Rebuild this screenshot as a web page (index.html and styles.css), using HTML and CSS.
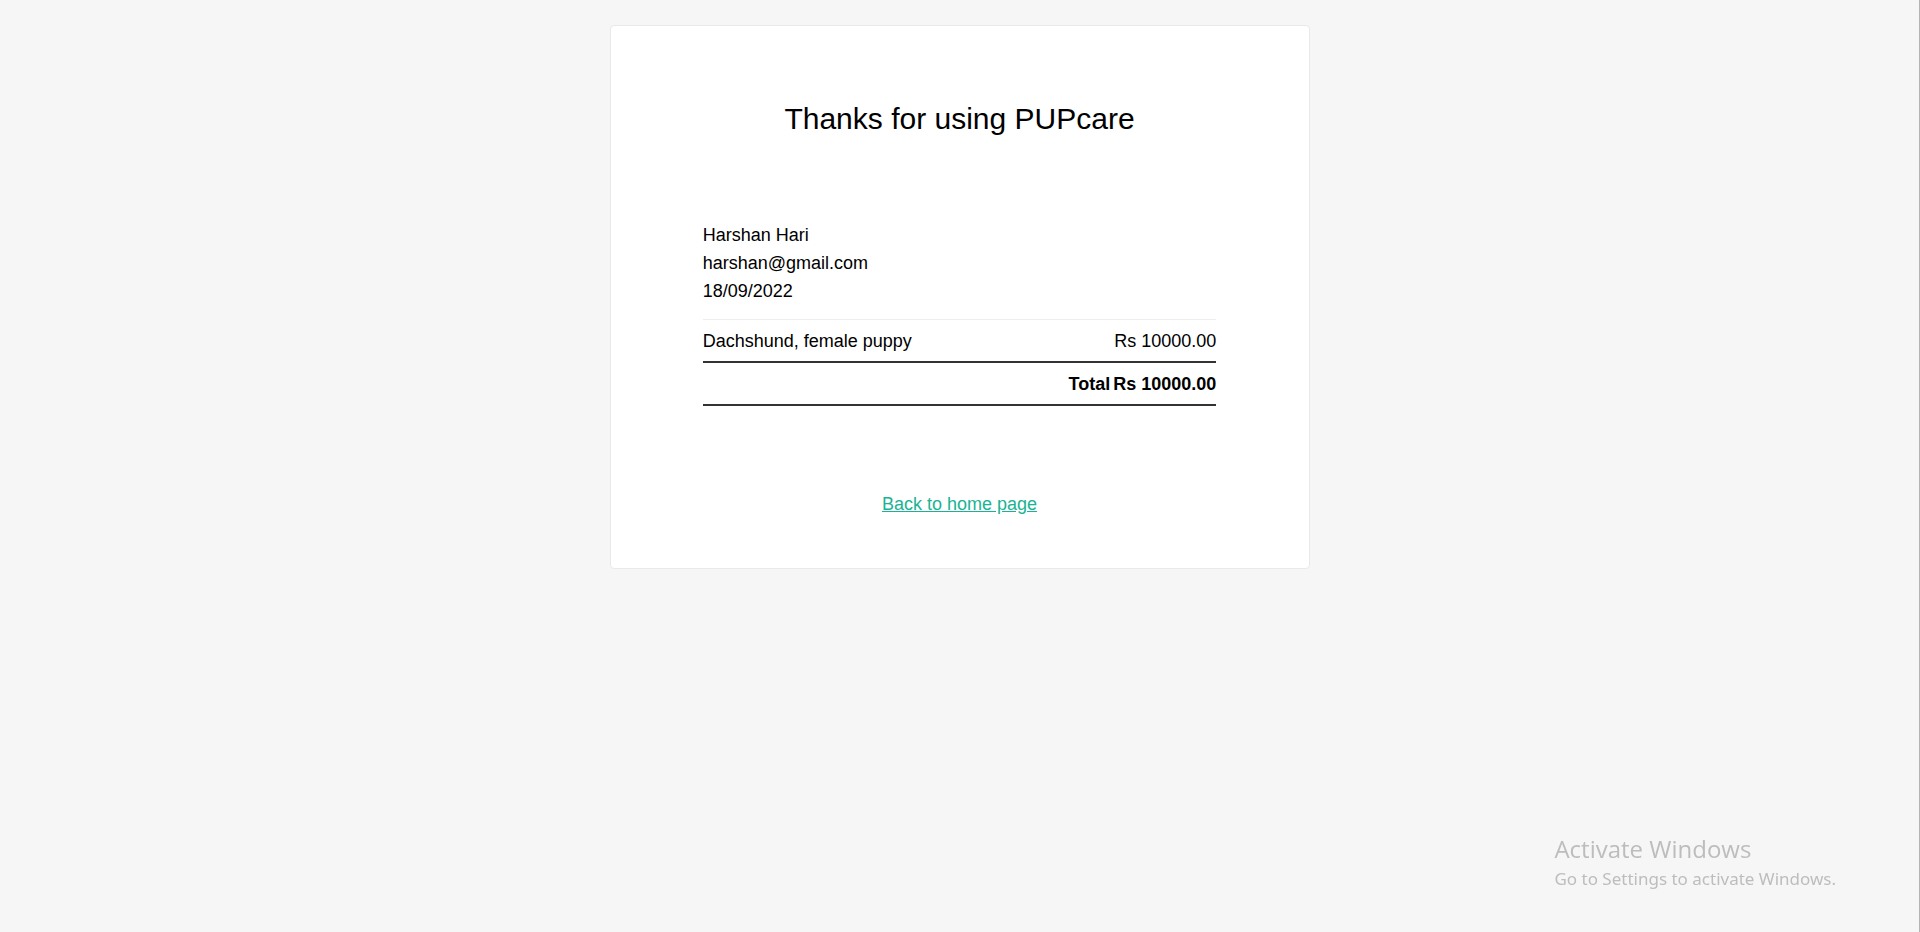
FILE: index.html
```html
<!DOCTYPE html>
<html lang="en">
<head>
<meta charset="utf-8">
<meta name="viewport" content="width=device-width, initial-scale=1">
<title>PUPcare - Receipt</title>
<link rel="stylesheet" href="styles.css">
</head>
<body>
<main class="receipt">
  <h1 class="receipt-title">Thanks for using PUPcare</h1>
  <div class="invoice">
    <address class="customer">
      <div>Harshan Hari</div>
      <div>harshan@gmail.com</div>
      <div>18/09/2022</div>
    </address>
    <table class="items">
      <tbody>
        <tr class="item">
          <td>Dachshund, female puppy</td>
          <td class="amount">Rs 10000.00</td>
        </tr>
      </tbody>
      <tfoot>
        <tr class="total">
          <th class="total-label" scope="row">Total</th>
          <td class="amount">Rs 10000.00</td>
        </tr>
      </tfoot>
    </table>
  </div>
  <a class="home-link" href="#">Back to home page</a>
</main>
<aside class="watermark">
  <p class="watermark-title">Activate Windows</p>
  <p class="watermark-text">Go to Settings to activate Windows.</p>
</aside>
</body>
</html>
```

FILE: styles.css
```css
* {
  box-sizing: border-box;
}

body {
  margin: 0;
  min-height: 100vh;
  padding: 25px 0;
  border-right: 1px solid #b4b4b4;
  background: #f6f6f6;
  color: #000;
  font-family: "Liberation Sans", Arial, sans-serif;
  font-size: 18px;
  line-height: 28px;
}

.receipt {
  display: flex;
  flex-direction: column;
  align-items: center;
  max-width: 700px;
  margin: 0 auto;
  padding: 75px 28px 50px;
  border: 1px solid #e9e9e9;
  border-radius: 4px;
  background: #fff;
}

.receipt-title {
  margin: 0 0 84px;
  font-size: 30px;
  font-weight: 400;
  line-height: 36px;
}

.invoice {
  width: 80%;
  margin-bottom: 84px;
}

.customer {
  padding-bottom: 14px;
  font-style: normal;
}

.items {
  width: 100%;
  border-spacing: 0;
}

.items td,
.items th {
  padding: 7px 0 6px;
}

.item td {
  border-top: 1px solid #eee;
}

.total td,
.total th {
  border-top: 2px solid #333;
  border-bottom: 2px solid #333;
  font-weight: 700;
}

.items .total-label {
  padding-right: 3px;
  text-align: right;
}

.items .amount {
  width: 102px;
  text-align: right;
  white-space: nowrap;
}

.home-link {
  color: #1ab394;
  text-decoration: underline;
}

.watermark {
  position: fixed;
  right: 84px;
  bottom: 39px;
  color: #bdbdbd;
  font-family: "Open Sans", "Noto Sans", sans-serif;
}

.watermark p {
  margin: 0;
}

.watermark-title {
  font-size: 24px;
  line-height: 32px;
}

.watermark-text {
  font-family: "Noto Sans", "Open Sans", sans-serif;
  font-size: 17px;
}
```
